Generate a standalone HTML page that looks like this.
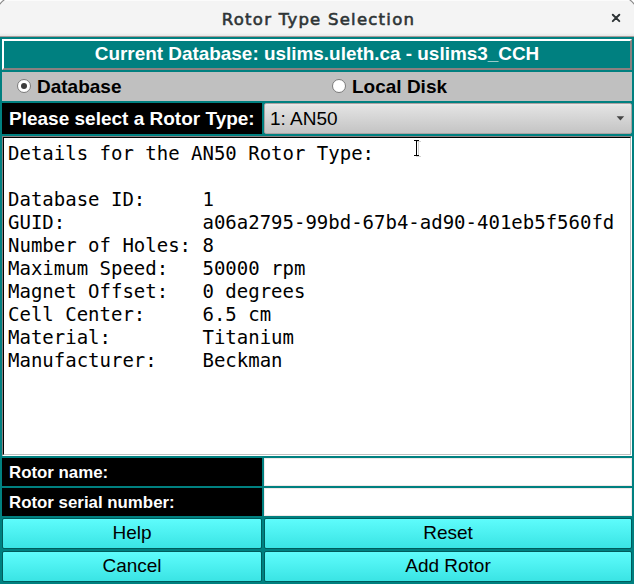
<!DOCTYPE html>
<html><head><meta charset="utf-8">
<title>Rotor Type Selection</title>
<style>
html,body{margin:0;padding:0;}
body{width:634px;height:584px;overflow:hidden;background:#008080;font-family:"Liberation Sans",sans-serif;position:relative;}
.abs{position:absolute;box-sizing:border-box;}
#title{left:0;top:0;width:634px;height:37px;background:linear-gradient(#f4f4f4,#f4f4f4 32px,#efefef 33px,#e5e5e5 35px);border-top:1px solid #fbfbfb;border-bottom:1px solid #a89c9a;}
#title .t{position:absolute;left:0;width:637px;top:8px;text-align:center;font-family:"DejaVu Sans","Liberation Sans",sans-serif;font-size:16.5px;letter-spacing:1.24px;-webkit-text-stroke:0.6px #2e3436;color:#2e3436;line-height:22px;}
#banner{left:2px;top:39px;width:630px;height:31px;background:#008080;border-top:2px solid #fff;border-left:2px solid #fff;border-bottom:2px solid #8a8080;border-right:2px solid #8a8080;color:#fff;font-weight:bold;font-size:18.92px;text-align:center;line-height:25px;}
#radio{left:2px;top:72px;width:630px;height:29px;background:#c0c0c0;}
.rl{position:absolute;top:0;font-weight:bold;font-size:19px;line-height:29px;color:#000;}
.rb{position:absolute;width:14px;height:14px;border-radius:50%;background:#fff;border:1px solid #7a7a7a;box-sizing:border-box;}
.rb i{position:absolute;left:3px;top:3px;width:6px;height:6px;border-radius:50%;background:#3c3c3c;}
.lbl{background:#000;color:#fff;font-weight:bold;}
#sel{left:2px;top:103px;width:260px;height:31px;font-size:19px;line-height:31px;padding-left:7px;}
#combo{left:264px;top:103px;width:368px;height:31px;background:linear-gradient(#eaeaea,#e2e2e2 8%,#c4c4c4);border:1px solid #aaa2a2;border-radius:2px;font-size:19px;line-height:29px;padding-left:5px;color:#000;}
#combo .ar{position:absolute;left:350px;top:10px;}
#te{left:2px;top:136px;width:630px;height:320px;background:#fff;border-top:1px solid #8a8080;border-left:1px solid #8a8080;border-right:1px solid #fff;border-bottom:1px solid #fff;}
#te .in{position:absolute;left:0;top:0;right:0;bottom:0;border-top:1px solid #000;border-left:1px solid #000;border-right:1px solid #c0c0c0;border-bottom:1px solid #c0c0c0;}
#te pre{margin:0;position:absolute;left:5px;top:5px;font-family:"DejaVu Sans Mono",monospace;font-size:19px;line-height:23px;color:#000;}
.l2{left:2px;width:260px;height:28px;font-size:16.85px;line-height:30px;padding-left:7px;}
.inp{left:264px;width:368px;height:28px;background:#fff;border:1px solid #f0e8e8;}
.btn{height:31px;background:linear-gradient(#5efcfc,#3ae4e4);border:1px solid #005c5c;border-radius:2px;text-align:center;font-size:19px;line-height:27px;color:#000;}
</style></head><body>
<div id="title" class="abs"><div class="t">Rotor Type Selection</div>
<svg class="abs" style="left:608px;top:7px" width="16" height="16" viewBox="0 0 16 16"><path d="M4.8 6.7 L11.3 13.1 M11.3 6.7 L4.8 13.1" stroke="#2e3436" stroke-width="2" stroke-linecap="round" fill="none"/></svg>
</div>
<svg class="abs" style="left:0;top:0" width="8" height="8" viewBox="0 0 8 8"><path d="M0 0 H4.4 L0 4.4 Z" fill="#fff"/><path d="M-0.5 4.6 Q1.6 1.6 4.6 -0.5" stroke="#888888" stroke-width="1.1" fill="none"/></svg>
<svg class="abs" style="left:626px;top:0" width="8" height="8" viewBox="0 0 8 8"><path d="M8 0 H3.6 L8 4.4 Z" fill="#fff"/><path d="M8.5 4.6 Q6.4 1.6 3.4 -0.5" stroke="#888888" stroke-width="1.1" fill="none"/></svg>
<div id="banner" class="abs">Current Database: uslims.uleth.ca - uslims3_CCH</div>
<div id="radio" class="abs">
 <div class="rb" style="left:15px;top:7px;"><i></i></div><div class="rl" style="left:35px;">Database</div>
 <div class="rb" style="left:330px;top:7px;"></div><div class="rl" style="left:350px;">Local Disk</div>
</div>
<div id="sel" class="abs lbl">Please select a Rotor Type:</div>
<div id="combo" class="abs">1: AN50<svg class="ar" width="12" height="10" viewBox="0 0 12 10"><path d="M1.6 2.2 H9.2 L5.4 6.4 Z" fill="#464646"/></svg></div>
<div id="te" class="abs"><div class="in"></div><pre>Details for the AN50 Rotor Type:

Database ID:     1
GUID:            a06a2795-99bd-67b4-ad90-401eb5f560fd
Number of Holes: 8
Maximum Speed:   50000 rpm
Magnet Offset:   0 degrees
Cell Center:     6.5 cm
Material:        Titanium
Manufacturer:    Beckman</pre>
<svg class="abs" style="left:409px;top:1px" width="12" height="20" viewBox="0 0 12 20"><path d="M4 3.5 H9 M6.5 3.5 V18.5 M4 18.5 H9" stroke="#d2d2d2" stroke-width="1" fill="none"/><path d="M2 2.5 H7 M4.5 2.5 V17.5 M2 17.5 H7" stroke="#000" stroke-width="1" fill="none"/></svg>
</div>
<div class="abs lbl l2" style="top:458px;">Rotor name:</div>
<div class="abs inp" style="top:458px;"></div>
<div class="abs lbl l2" style="top:488px;">Rotor serial number:</div>
<div class="abs inp" style="top:488px;"></div>
<div class="abs btn" style="left:2px;top:518px;width:260px;">Help</div>
<div class="abs btn" style="left:264px;top:518px;width:368px;">Reset</div>
<div class="abs btn" style="left:2px;top:551px;width:260px;">Cancel</div>
<div class="abs btn" style="left:264px;top:551px;width:368px;">Add Rotor</div>
</body></html>
